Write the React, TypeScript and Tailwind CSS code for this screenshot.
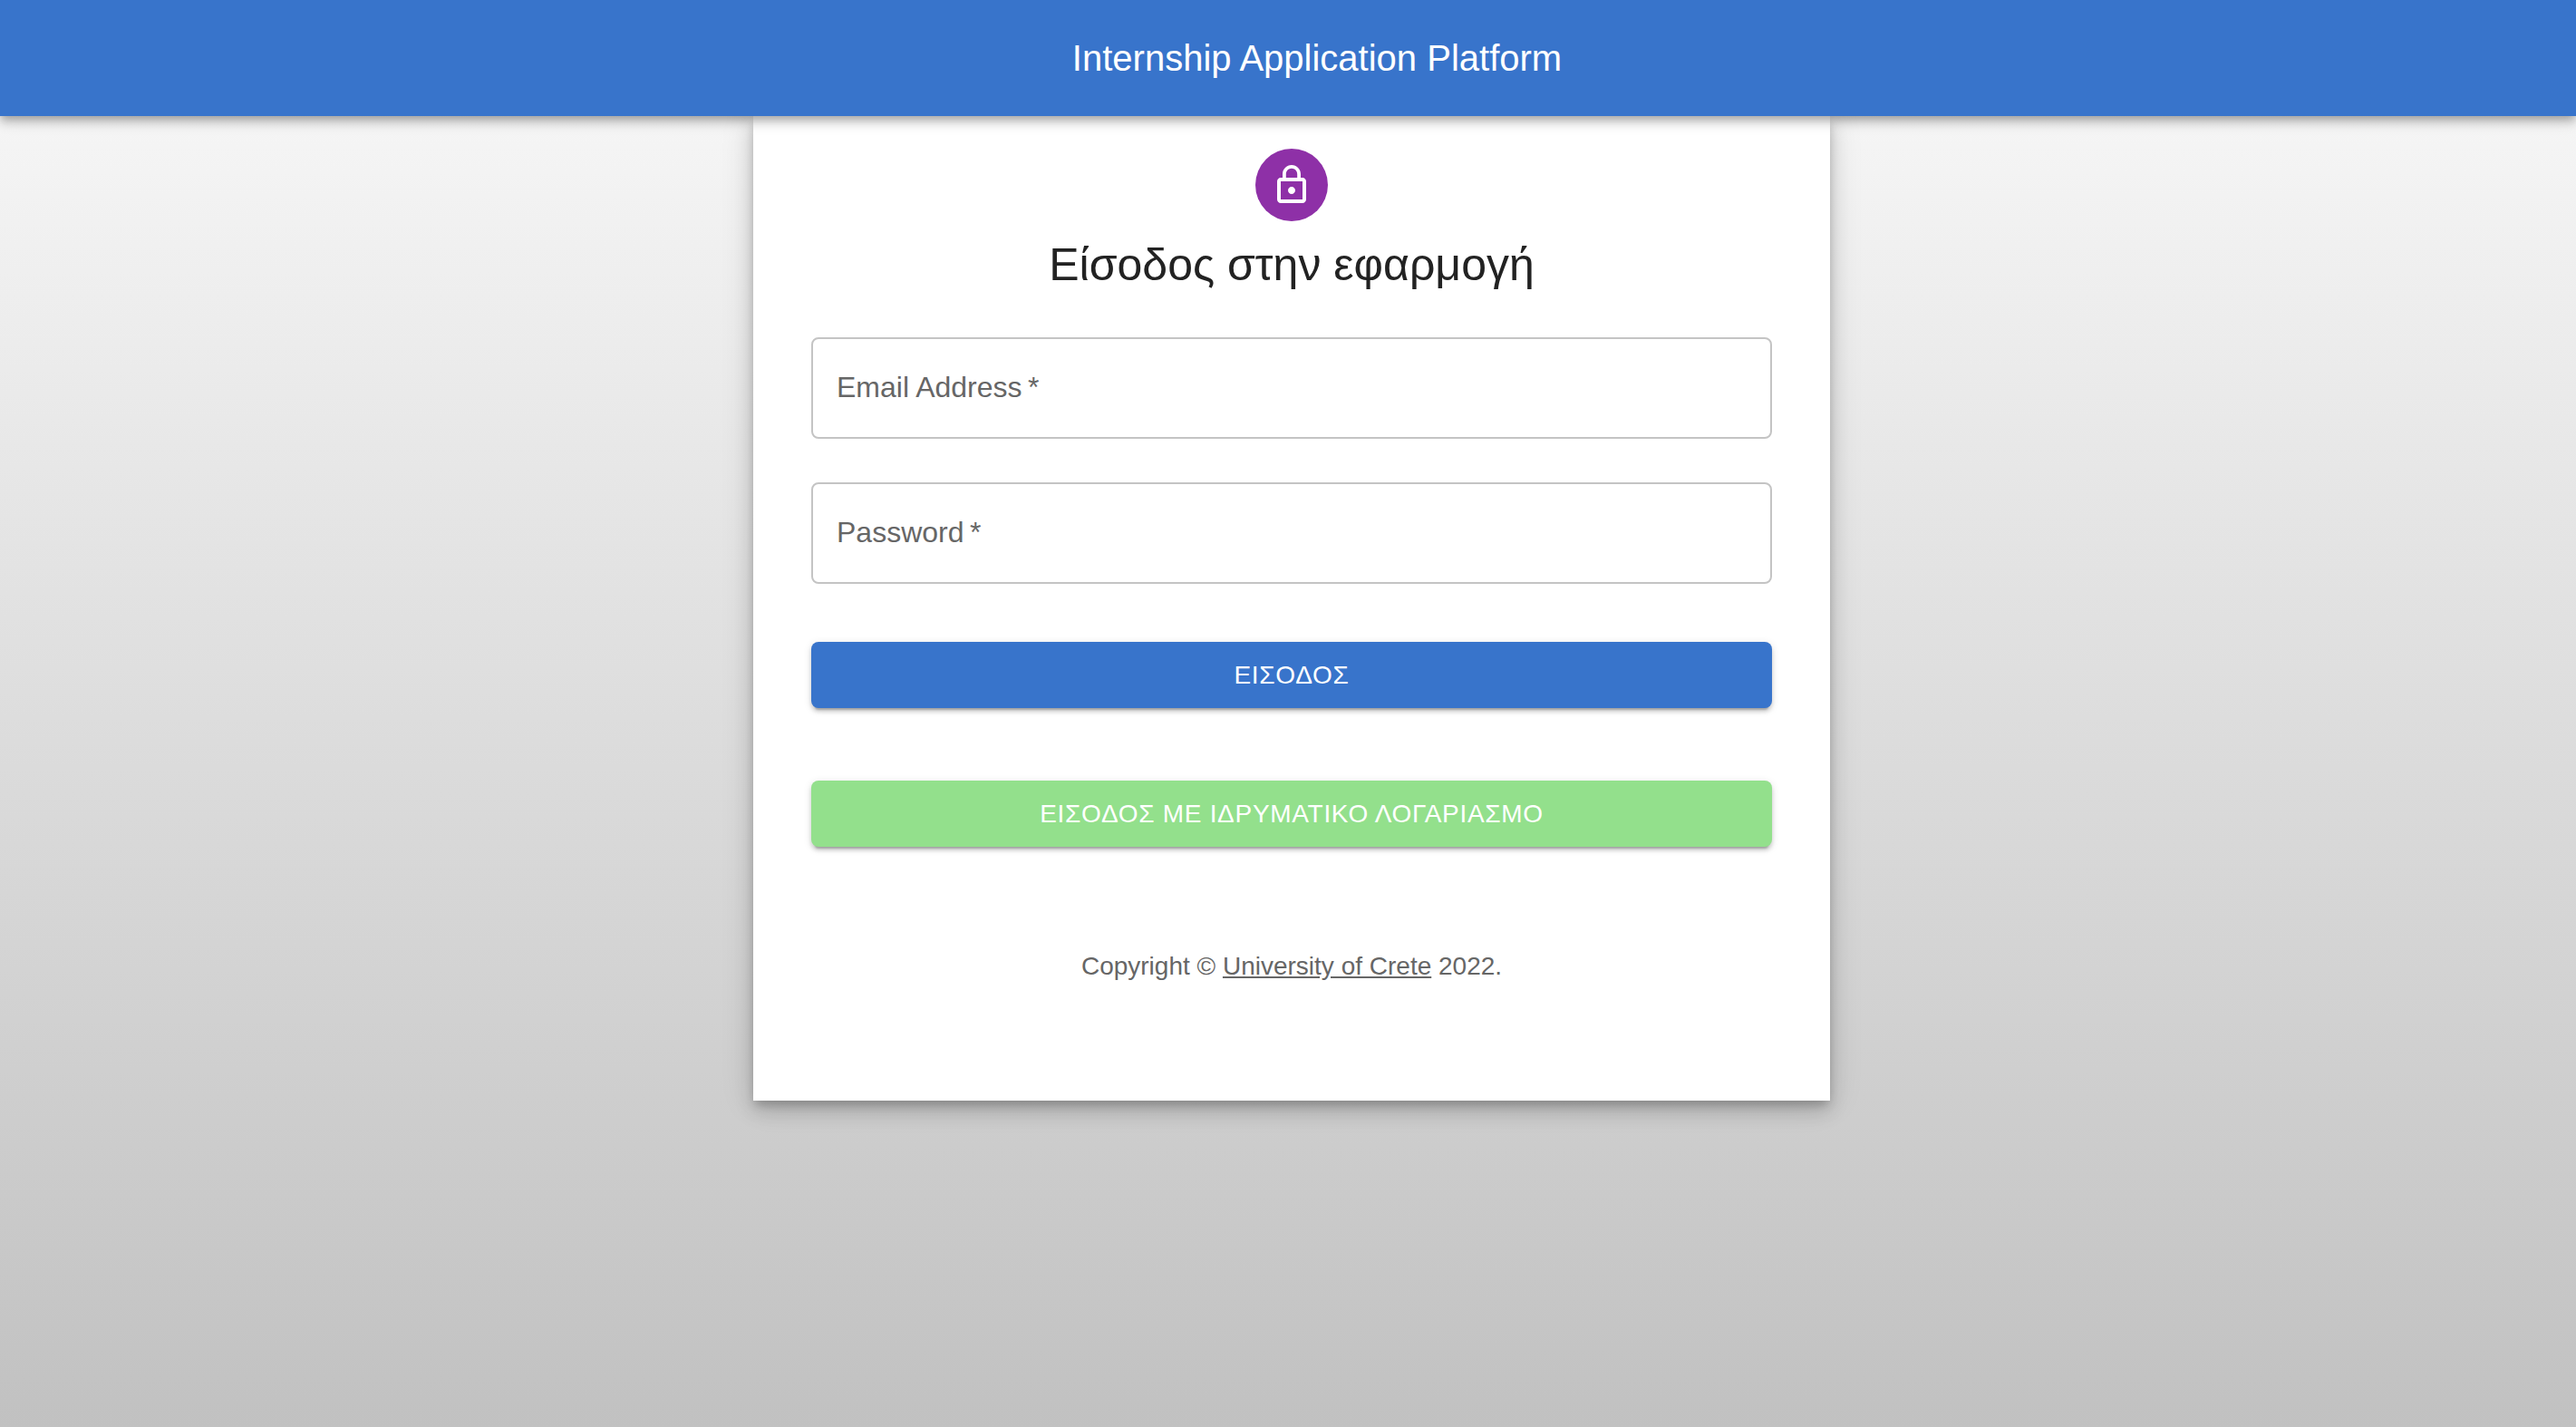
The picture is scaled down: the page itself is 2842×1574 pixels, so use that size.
import { useId, useState } from "react";

function LockIcon() {
  return (
    <svg viewBox="0 0 24 24" className="size-12 fill-current" aria-hidden="true">
      <path d="M12 17c1.1 0 2-.9 2-2s-.9-2-2-2-2 .9-2 2 .9 2 2 2zm6-9h-1V6c0-2.76-2.24-5-5-5S7 3.24 7 6v2H6c-1.1 0-2 .9-2 2v10c0 1.1.9 2 2 2h12c1.1 0 2-.9 2-2V10c0-1.1-.9-2-2-2zM8.9 6c0-1.71 1.39-3.1 3.1-3.1s3.1 1.39 3.1 3.1v2H8.9V6zM18 20H6V10h12v10z" />
    </svg>
  );
}

function Field({ label, type }: { label: string; type: string }) {
  const id = useId();
  const [value, setValue] = useState("");
  return (
    <div className="relative">
      <input
        id={id}
        type={type}
        required
        value={value}
        onChange={(e) => setValue(e.target.value)}
        placeholder=" "
        className="peer block h-28 w-full rounded-lg border-2 border-[#c4c4c4] bg-transparent px-6.5 text-[32px] text-[#222] outline-none focus:border-[#3874cb]"
      />
      <label
        htmlFor={id}
        className="pointer-events-none absolute inset-y-0 left-7 flex items-center pb-0.5 text-[32px] text-[#666] peer-focus:hidden peer-[:not(:placeholder-shown)]:hidden"
      >
        {label}&thinsp;*
      </label>
    </div>
  );
}

function ActionButton({ color, children }: { color: string; children: string }) {
  return (
    <button
      type="submit"
      className={
        "block w-full rounded-lg px-8 py-3 text-[28px] leading-[49px] tracking-wide text-white shadow-[0_6px_2px_-4px_rgba(0,0,0,0.2),0_4px_4px_0_rgba(0,0,0,0.14),0_2px_10px_0_rgba(0,0,0,0.12)] " +
        color
      }
    >
      {children}
    </button>
  );
}

export default function App() {
  return (
    <div className="flex min-h-screen flex-col bg-linear-to-b from-[#fafafa] to-[#c1c1c1] font-['Liberation_Sans',Arial,sans-serif]">
      <header className="relative z-10 flex h-32 items-center justify-center bg-[#3874cb] pl-16 shadow-[0_4px_8px_-2px_rgba(0,0,0,0.2),0_8px_10px_0_rgba(0,0,0,0.14),0_2px_20px_0_rgba(0,0,0,0.12)]">
        <h1 className="text-[40px] leading-16 text-white">Internship Application Platform</h1>
      </header>
      <div className="flex justify-center pl-2">
        <main className="w-full max-w-[1188px] bg-white px-16 pt-9 pb-32 shadow-[0_6px_10px_-2px_rgba(0,0,0,0.2),0_12px_20px_0_rgba(0,0,0,0.14),0_2px_36px_0_rgba(0,0,0,0.12)]">
          <div className="flex flex-col items-center gap-4">
            <div className="flex size-20 items-center justify-center rounded-full bg-[#8e30a7] text-white">
              <LockIcon />
            </div>
            <h2 className="text-[50px] leading-16 text-[#222]">Είσοδος στην εφαρμογή</h2>
          </div>
          <form className="mt-12" onSubmit={(e) => e.preventDefault()}>
            <div className="flex flex-col gap-12">
              <Field label="Email Address" type="email" />
              <Field label="Password" type="password" />
            </div>
            <div className="mt-16 flex flex-col gap-20">
              <ActionButton color="bg-[#3874cb]">ΕΙΣΟΔΟΣ</ActionButton>
              <ActionButton color="bg-[#93e08c]">ΕΙΣΟΔΟΣ ΜΕ ΙΔΡΥΜΑΤΙΚΟ ΛΟΓΑΡΙΑΣΜΟ</ActionButton>
            </div>
          </form>
          <p className="mt-28 text-center text-[28px] leading-10 text-[#666]">
            Copyright ©{" "}
            <a href="#" className="underline">
              University of Crete
            </a>{" "}
            2022.
          </p>
        </main>
      </div>
    </div>
  );
}
